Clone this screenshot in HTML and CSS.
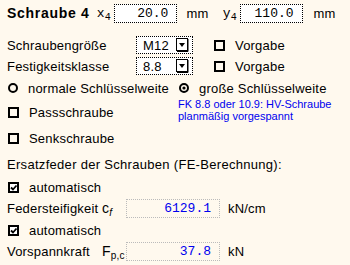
FILE: index.html
```html
<!DOCTYPE html>
<html lang="de">
<head>
    <meta charset="UTF-8">
    <title>Schraube 4</title>
    <link rel="stylesheet" href="styles.css">
</head>
<body>
    <div class="panel">
        <div class="head">
            <span class="title">Schraube 4</span>
            <span class="coord">x<sub>4</sub></span>
            <input class="num" type="text" value="20.0" readonly>
            <span class="unit">mm</span>
            <span class="coord coord-y">y<sub>4</sub></span>
            <input class="num" type="text" value="110.0" readonly>
            <span class="unit unit-y">mm</span>
        </div>

        <div class="row row-size">
            <span class="label">Schraubengröße</span>
            <span class="select">M12
                <svg class="drop" viewBox="0 0 13 14" width="13" height="14"><rect x="0.5" y="0.5" width="11" height="12" fill="#fff" stroke="#000"/><path d="M12 1v12.5H1" fill="none" stroke="#000"/><path d="M3 5h6l-3 4z" fill="#000"/></svg>
            </span>
            <svg class="box box-right" viewBox="0 0 11 11" width="11" height="11"><rect x="1" y="1" width="9" height="9" fill="none" stroke="#000" stroke-width="2"/></svg>
            <span>Vorgabe</span>
        </div>
        <div class="row row-class">
            <span class="label">Festigkeitsklasse</span>
            <span class="select">8.8
                <svg class="drop" viewBox="0 0 13 14" width="13" height="14"><rect x="0.5" y="0.5" width="11" height="12" fill="#fff" stroke="#000"/><path d="M12 1v12.5H1" fill="none" stroke="#000"/><path d="M3 5h6l-3 4z" fill="#000"/></svg>
            </span>
            <svg class="box box-right" viewBox="0 0 11 11" width="11" height="11"><rect x="1" y="1" width="9" height="9" fill="none" stroke="#000" stroke-width="2"/></svg>
            <span>Vorgabe</span>
        </div>

        <div class="options">
            <div class="col">
                <div class="row">
                    <svg class="radio" viewBox="0 0 10 10" width="10" height="10"><circle cx="5" cy="5" r="4" fill="none" stroke="#000" stroke-width="2"/></svg>
                    <span>normale Schlüsselweite</span>
                </div>
                <div class="row row-pass">
                    <svg class="box" viewBox="0 0 11 11" width="11" height="11"><rect x="1" y="1" width="9" height="9" fill="none" stroke="#000" stroke-width="2"/></svg>
                    <span>Passschraube</span>
                </div>
                <div class="row row-senk">
                    <svg class="box" viewBox="0 0 11 11" width="11" height="11"><rect x="1" y="1" width="9" height="9" fill="none" stroke="#000" stroke-width="2"/></svg>
                    <span>Senkschraube</span>
                </div>
            </div>
            <div class="col">
                <div class="row">
                    <svg class="radio" viewBox="0 0 10 10" width="10" height="10"><circle cx="5" cy="5" r="4" fill="none" stroke="#000" stroke-width="2"/><circle cx="5" cy="5" r="1.6" fill="#000"/></svg>
                    <span>große Schlüsselweite</span>
                </div>
                <p class="note">FK 8.8 oder 10.9: HV-Schraube<br>planmäßig vorgespannt</p>
            </div>
        </div>

        <div class="row row-section">Ersatzfeder der Schrauben (FE-Berechnung):</div>

        <div class="row row-auto">
            <svg class="box" viewBox="0 0 11 11" width="11" height="11"><rect x="1" y="1" width="9" height="9" fill="#fff" stroke="#000" stroke-width="2"/><path d="M3 5.5l2 2 3.5-4" fill="none" stroke="#000" stroke-width="1.8"/></svg>
            <span>automatisch</span>
        </div>
        <div class="row row-field">
            <span class="label label-field"><span class="name">Federsteifigkeit</span><span class="sym">c<sub class="ital">f</sub></span></span>
            <input class="num num-blue" type="text" value="6129.1" readonly>
            <span class="unit unit-field">kN/cm</span>
        </div>
        <div class="row row-auto">
            <svg class="box" viewBox="0 0 11 11" width="11" height="11"><rect x="1" y="1" width="9" height="9" fill="#fff" stroke="#000" stroke-width="2"/><path d="M3 5.5l2 2 3.5-4" fill="none" stroke="#000" stroke-width="1.8"/></svg>
            <span>automatisch</span>
        </div>
        <div class="row row-field">
            <span class="label label-field"><span class="name">Vorspannkraft</span><span class="sym">F<sub>p,c</sub></span></span>
            <input class="num num-blue" type="text" value="37.8" readonly>
            <span class="unit unit-field">kN</span>
        </div>
    </div>
</body>
</html>
```

FILE: styles.css
```css
html, body {margin: 0; background: #fff9ee;}
body {font-family: "Liberation Sans", Arial, sans-serif; font-size: 13px; letter-spacing: 0.2px; color: #000;}
.panel {width: 350px; height: 265px; padding: 3px 0 0 7px; box-sizing: border-box;}

.head {display: flex; align-items: center; height: 20px;}
.title {width: 91px; font-size: 14px; font-weight: bold; letter-spacing: 0.7px;}
.coord {width: 18px; font-family: "Liberation Mono", monospace; font-size: 13px;}
.coord-y {width: 17px;}
sub {font-size: 10px; vertical-align: -3px; line-height: 0;}
.ital {font-style: italic;}

.num {width: 63px; height: 19px; box-sizing: border-box; margin: 0; padding: 0 8px 0 0; border: 1px dotted #000; background: #fff; font-family: "Liberation Mono", monospace; font-size: 13px; letter-spacing: 0; text-align: right; color: #000; outline: none;}
.unit {margin-left: 9px; width: 37px;}
.unit-y {margin-left: 11px;}

.row {display: flex; align-items: center; height: 18px;}
.row-size {margin-top: 13px;}
.row-class {margin-top: 3px;}
.label {width: 129px; flex: none;}

.select {display: flex; align-items: center; justify-content: space-between; width: 57px; height: 18px; box-sizing: border-box; padding: 0 3px 0 6px; border: 1px dotted #000; background: #fff;}
.drop {display: block;}
.box, .radio {display: block; flex: none; margin: 0 10px 0 1px;}
.box-right {margin-left: 21px;}

.options {display: grid; grid-template-columns: 171px 1fr; margin-top: 4px;}
.row-pass {margin-top: 6px;}
.row-senk {margin-top: 8px;}
.note {margin: 1px 0 0; font-size: 11px; line-height: 12px; letter-spacing: 0; color: #0000ee;}

.row-section {margin-top: 8px; letter-spacing: 0.3px;}
.row-auto {margin-top: 5px;}
.row-auto + .row-field {margin-top: 3px;}
.row-field + .row-auto {margin-top: 4px;}
.row-field {margin-top: 4px;}
.label-field {display: flex; align-items: center; width: 119px;}
.name {width: 95px;}
.sym {font-size: 14px;}
.num-blue {width: 94px; height: 19px; border-color: #bbb; background: transparent; color: #0000ee;}
.unit-field {margin-left: 8px; width: auto;}
```
